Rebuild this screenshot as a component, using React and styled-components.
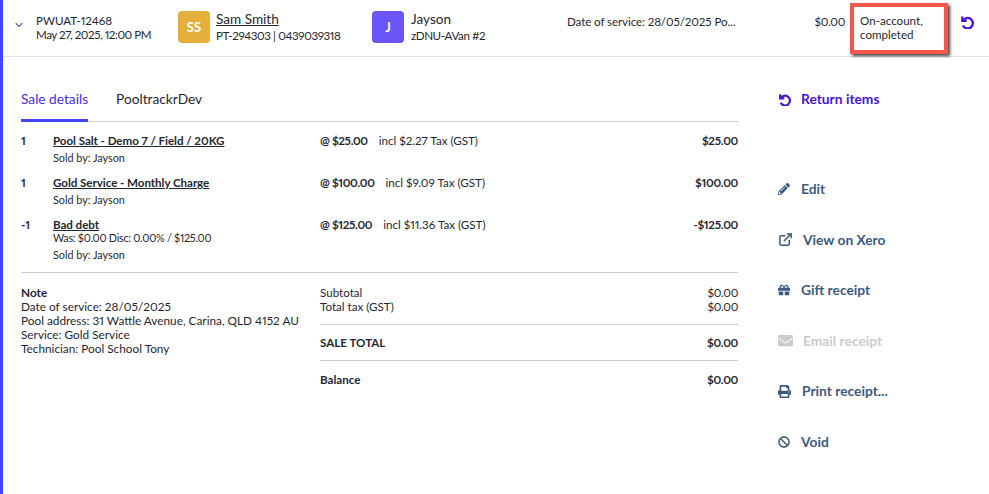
import styled, { createGlobalStyle } from 'styled-components';
import { FaBan, FaEnvelope, FaGift, FaPencilAlt, FaPrint } from 'react-icons/fa';
import { FiChevronDown, FiExternalLink } from 'react-icons/fi';

const lines = [
  {
    qty: '1',
    name: 'Pool Salt - Demo 7 / Field / 20KG',
    price: '@ $25.00',
    tax: 'incl $2.27 Tax (GST)',
    total: '$25.00',
  },
  {
    qty: '1',
    name: 'Gold Service - Monthly Charge',
    price: '@ $100.00',
    tax: 'incl $9.09 Tax (GST)',
    total: '$100.00',
  },
  {
    qty: '-1',
    name: 'Bad debt',
    was: 'Was: $0.00 Disc: 0.00% / $125.00',
    price: '@ $125.00',
    tax: 'incl $11.36 Tax (GST)',
    total: '-$125.00',
  },
];

const actions = [
  { label: 'Edit', icon: <FaPencilAlt size={12} />, gap: 8 },
  { label: 'View on Xero', icon: <FiExternalLink size={15} strokeWidth={2.4} />, gap: 10 },
  { label: 'Gift receipt', icon: <FaGift size={12} />, gap: 8 },
  { label: 'Email receipt', icon: <FaEnvelope size={15} />, gap: 10, disabled: true },
  { label: 'Print receipt...', icon: <FaPrint size={13} />, gap: 9 },
  { label: 'Void', icon: <FaBan size={12} />, gap: 8 },
];

function UndoIcon({ size }) {
  return (
    <svg width={size} height={size} viewBox="0 0 24 24" fill="none" stroke="currentColor" strokeWidth="4">
      <path d="M4 2.5v7.5h7.5" />
      <path d="M5 10A9 9 0 1 1 5 18" />
    </svg>
  );
}

export default function App() {
  return (
    <Page>
      <GlobalStyle />
      <Header>
        <Chevron>
          <FiChevronDown size={12} strokeWidth={2.4} />
        </Chevron>
        <SaleId>
          <div>PWUAT-12468</div>
          <SaleDate>May 27, 2025, 12:00 PM</SaleDate>
        </SaleId>
        <Person $width={194} $gap={6}>
          <Avatar $color="#e5af3c">SS</Avatar>
          <div>
            <PersonName $link>Sam Smith</PersonName>
            <PersonSub>PT-294303 | 0439039318</PersonSub>
          </div>
        </Person>
        <Person $width={195} $gap={7}>
          <Avatar $color="#6c55f6">J</Avatar>
          <div>
            <PersonName>Jayson</PersonName>
            <PersonSub>zDNU-AVan #2</PersonSub>
          </div>
        </Person>
        <Note>Date of service: 28/05/2025 Po...</Note>
        <Amount>$0.00</Amount>
        <Status>
          On-account,
          <br />
          completed
          <Highlight />
        </Status>
        <UndoButton>
          <UndoIcon size={14} />
        </UndoButton>
      </Header>
      <Body>
        <Details>
          <Tabs>
            <Tab $active>Sale details</Tab>
            <Tab>PooltrackrDev</Tab>
          </Tabs>
          <Lines>
            {lines.map(line => (
              <LineRow key={line.name}>
                <Qty>{line.qty}</Qty>
                <div>
                  <ItemName>{line.name}</ItemName>
                  {line.was && <Was>{line.was}</Was>}
                  <SoldBy>Sold by: Jayson</SoldBy>
                </div>
                <PriceCell>
                  <strong>{line.price}</strong>
                  <span>{line.tax}</span>
                </PriceCell>
                <LineTotal>{line.total}</LineTotal>
              </LineRow>
            ))}
          </Lines>
          <Summary>
            <NoteBlock>
              <strong>Note</strong>
              <div>Date of service: 28/05/2025</div>
              <div>Pool address: 31 Wattle Avenue, Carina, QLD 4152 AU</div>
              <div>Service: Gold Service</div>
              <div>Technician: Pool School Tony</div>
            </NoteBlock>
            <Totals>
              <TotalGroup $top={0} $bottom={10} $line>
                <TotalRow>
                  <span>Subtotal</span>
                  <Money>$0.00</Money>
                </TotalRow>
                <TotalRow>
                  <span>Total tax (GST)</span>
                  <Money>$0.00</Money>
                </TotalRow>
              </TotalGroup>
              <TotalGroup $top={11} $bottom={10} $bold $line>
                <TotalRow>
                  <span>SALE TOTAL</span>
                  <Money>$0.00</Money>
                </TotalRow>
              </TotalGroup>
              <TotalGroup $top={12} $bottom={0} $bold>
                <TotalRow>
                  <span>Balance</span>
                  <Money>$0.00</Money>
                </TotalRow>
              </TotalGroup>
            </Totals>
          </Summary>
        </Details>
        <Actions>
          <ReturnAction>
            <UndoIcon size={13} />
            Return items
          </ReturnAction>
          <ActionList>
            {actions.map(action => (
              <Action key={action.label} $disabled={action.disabled} $gap={action.gap}>
                <ActionIcon>{action.icon}</ActionIcon>
                {action.label}
              </Action>
            ))}
          </ActionList>
        </Actions>
      </Body>
    </Page>
  );
}

const GlobalStyle = createGlobalStyle`
  body {
    margin: 0;
    background: #fff;
    font-family: Lato, "Liberation Sans", sans-serif;
    font-variant-numeric: proportional-nums;
    color: #1f2733;
  }
`;

const Page = styled.div`
  width: 989px;
  height: 494px;
  box-sizing: border-box;
  border-left: 3px solid #4446ff;
  overflow: hidden;
`;

const Header = styled.header`
  height: 57px;
  box-sizing: border-box;
  border-bottom: 1px solid #e2e3e8;
  display: flex;
  align-items: center;
  font-size: 11.6px;
  line-height: 14px;
`;

const Chevron = styled.div`
  width: 33px;
  padding-left: 10px;
  margin-top: -6px;
  box-sizing: border-box;
  display: flex;
  color: #5d7390;
`;

const SaleId = styled.div`
  width: 142px;
`;

const SaleDate = styled.div`
  letter-spacing: -0.45px;
`;

const Person = styled.div`
  width: ${p => p.$width}px;
  display: flex;
  align-items: center;
  gap: ${p => p.$gap}px;
`;

const Avatar = styled.div`
  width: 32px;
  height: 32px;
  margin-top: -3px;
  border-radius: 4px;
  background: ${p => p.$color};
  color: #fff;
  font-size: 13px;
  font-weight: 700;
  display: flex;
  align-items: center;
  justify-content: center;
`;

const PersonName = styled.div`
  font-size: 13.6px;
  line-height: 17px;
  margin-top: -3px;
  text-decoration: ${p => (p.$link ? 'underline' : 'none')};
`;

const PersonSub = styled.div`
  margin-top: 1px;
  letter-spacing: -0.4px;
`;

const Note = styled.div`
  width: 215px;
  margin-top: -13px;
  letter-spacing: -0.1px;
`;

const Amount = styled.div`
  width: 63px;
  text-align: right;
  margin-top: -13px;
  letter-spacing: -0.3px;
`;

const Status = styled.div`
  position: relative;
  width: 100px;
  margin-left: 15px;
  margin-top: -1px;
`;

const Highlight = styled.span`
  position: absolute;
  left: -10px;
  top: -11px;
  width: 90px;
  height: 43px;
  border: 4px solid #f4574c;
  box-sizing: content-box;
  box-shadow: 2px 2px 3px rgba(0, 0, 0, 0.75);
`;

const UndoButton = styled.div`
  display: flex;
  color: #4a14d8;
  margin-top: -12px;
`;

const Body = styled.main`
  display: flex;
  padding-left: 18px;
`;

const Details = styled.section`
  width: 717px;
`;

const Tabs = styled.nav`
  display: flex;
  gap: 28px;
  height: 65px;
  box-sizing: border-box;
  border-bottom: 1px solid #cccccc;
  align-items: flex-end;
`;

const Tab = styled.div`
  font-size: 13.7px;
  line-height: 17px;
  padding-bottom: 12px;
  margin-bottom: -1px;
  color: ${p => (p.$active ? '#4a2be0' : '#1f2733')};
  border-bottom: 3px solid ${p => (p.$active ? '#4446ff' : 'transparent')};
`;

const Lines = styled.div`
  padding-top: 11px;
  padding-bottom: 9px;
  border-bottom: 1px solid #cccccc;
  display: grid;
  gap: 9px;
  font-size: 11.6px;
  line-height: 16px;
`;

const LineRow = styled.div`
  display: grid;
  grid-template-columns: 32px 267px 1fr 90px;
`;

const Qty = styled.div`
  font-weight: 700;
`;

const ItemName = styled.div`
  font-weight: 700;
  text-decoration: underline;
  line-height: 16px;
  letter-spacing: -0.05px;
`;

const Was = styled.div`
  font-size: 10.8px;
  line-height: 13px;
  margin: -2px 0 3px;
  letter-spacing: -0.25px;
`;

const SoldBy = styled.div`
  font-size: 10.8px;
  line-height: 16px;
  margin-top: 1px;
`;

const PriceCell = styled.div`
  display: flex;
  gap: 11px;

  strong {
    letter-spacing: -0.35px;
  }
`;

const LineTotal = styled.div`
  font-weight: 700;
  text-align: right;
  letter-spacing: -0.3px;
`;

const Summary = styled.div`
  display: grid;
  grid-template-columns: 299px 1fr;
  font-size: 11.6px;
  line-height: 14px;
  padding-top: 13px;
`;

const NoteBlock = styled.div`
  font-size: 11.8px;

  strong {
    font-weight: 700;
  }
`;

const Totals = styled.div`
  display: grid;
`;

const TotalGroup = styled.div`
  padding: ${p => p.$top}px 0 ${p => p.$bottom}px;
  border-bottom: ${p => (p.$line ? '1px solid #cccccc' : 'none')};
  font-weight: ${p => (p.$bold ? 700 : 400)};
`;

const TotalRow = styled.div`
  display: flex;
  justify-content: space-between;
`;

const Money = styled.span`
  letter-spacing: -0.3px;
`;

const Actions = styled.aside`
  margin-left: 40px;
  padding-top: 34px;
  font-size: 13.8px;
  font-weight: 700;
  line-height: 16px;
`;

const ReturnAction = styled.div`
  display: flex;
  align-items: center;
  gap: 10px;
  color: #4a14d8;
`;

const ActionList = styled.div`
  display: grid;
  gap: 34.6px;
  margin-top: 74px;
`;

const Action = styled.div`
  display: flex;
  align-items: center;
  gap: ${p => p.$gap}px;
  color: ${p => (p.$disabled ? '#cbcbcb' : '#3a5a84')};
`;

const ActionIcon = styled.span`
  display: flex;
  width: 15px;
`;
